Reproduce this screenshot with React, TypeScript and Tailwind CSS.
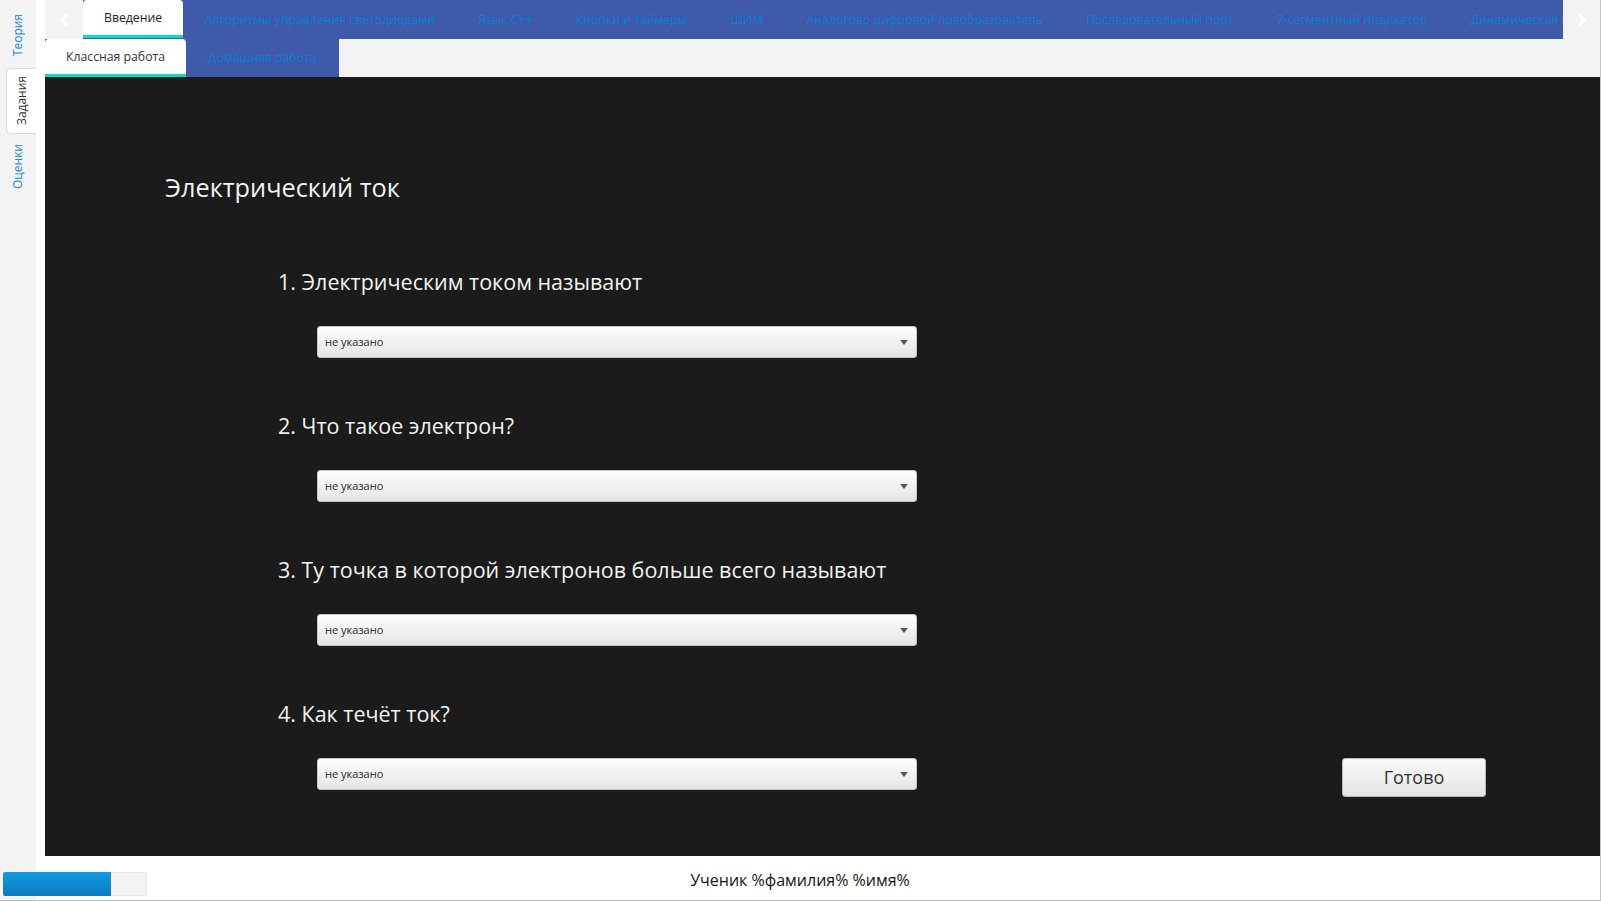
import { ChevronLeft, ChevronRight } from "lucide-react";

const topics = [
  "Алгоритмы управления светодиодами",
  "Язык С++",
  "Кнопки и таймеры",
  "ШИМ",
  "Аналогово цифровой преобразователь",
  "Последовательный порт",
  "7-сегментный индикатор",
  "Динамическая индикация",
];

const questions = [
  "Электрическим током называют",
  "Что такое электрон?",
  "Ту точка в которой электронов больше всего называют",
  "Как течёт ток?",
];

function Select() {
  return (
    <div className="ml-[39px] flex h-[32px] w-[600px] shrink-0 items-center justify-between rounded-[3px] border border-[#c4c4c4] bg-gradient-to-b from-[#fdfdfd] to-[#e5e5e5] pl-[7px] pr-[8px] text-[11px] text-[#2a2a2a]">
      <span>не указано</span>
      <svg width="8" height="5" viewBox="0 0 8 5">
        <path d="M0 0h8L4 5z" fill="#555" />
      </svg>
    </div>
  );
}

function SideTab({ label, active }: { label: string; active?: boolean }) {
  return (
    <div
      className={
        active
          ? "ml-[6px] flex h-[66px] items-center justify-center rounded-l-[5px] border border-r-0 border-[#dadada] bg-white text-[#333]"
          : "flex h-[66px] items-center justify-center text-[#1a86d2]"
      }
    >
      <span className="rotate-180 text-[12px] [writing-mode:vertical-rl]">{label}</span>
    </div>
  );
}

export default function App() {
  return (
    <div className="flex h-[901px] w-[1601px] flex-col border-r border-b border-[#c3c3c3] bg-white font-['Open_Sans',sans-serif]">
      <div className="flex min-h-0 flex-1">
        <aside className="w-[36px] shrink-0 bg-[#f3f3f3] pt-[2px]">
          <SideTab label="Теория" />
          <SideTab label="Задания" active />
          <SideTab label="Оценки" />
        </aside>

        <div className="ml-[9px] flex min-w-0 flex-1 flex-col">
          {/* lessons */}
          <div className="flex h-[39px] bg-[#f3f3f3]">
            <div className="flex w-[38px] shrink-0 items-center justify-center text-white">
              <ChevronLeft size={18} strokeWidth={4} />
            </div>
            <div className="flex min-w-0 flex-1 overflow-hidden bg-[#3f5aa9] text-[12.25px]">
              <div className="flex h-[38px] shrink-0 items-center rounded-t-[4px] border-b-[3px] border-[#0fd9c6] bg-white px-[21px] pt-[2px] font-medium text-[#222]">
                Введение
              </div>
              {topics.map((t) => (
                <div key={t} className="flex shrink-0 items-center whitespace-nowrap px-[21.6px] pt-[1px] text-[#0b7fd4]">
                  {t}
                </div>
              ))}
            </div>
            <div className="flex w-[37px] shrink-0 items-center justify-center text-white">
              <ChevronRight size={18} strokeWidth={4} />
            </div>
          </div>

          {/* work type */}
          <div className="flex h-[38px] bg-[#f3f3f3] text-[12.25px]">
            <div className="flex bg-[#3f5aa9]">
              <div className="flex items-center rounded-t-[4px] border-b-[3px] border-[#0fd9c6] bg-white px-[21px] pt-[2px] text-[#333]">
                Классная работа
              </div>
              <div className="flex items-center px-[22px] pt-[1px] text-[#0b7fd4]">Домашняя работа</div>
            </div>
          </div>

          <main className="flex-1 bg-[#1b1b1b] pl-[120px] pr-[114px] pt-[94px] text-[#f2f2f2]">
            <h1 className="text-[25.3px] leading-[32px]">Электрический ток</h1>
            <div className="mt-[65px] pl-[113px]">
              {questions.map((q, i) => (
                <div key={q} className={i ? "mt-[54px]" : ""}>
                  <p className="text-[21.5px] leading-[28px]">
                    {i + 1}. {q}
                  </p>
                  <div className="mt-[30px] flex items-start">
                    <Select />
                    {i === questions.length - 1 && (
                      <button className="ml-auto h-[39px] w-[144px] rounded-[3px] border border-[#b8b8b8] bg-gradient-to-b from-[#fafafa] to-[#e4e4e4] text-[18px] text-[#333]">
                        Готово
                      </button>
                    )}
                  </div>
                </div>
              ))}
            </div>
          </main>
        </div>
      </div>

      <footer className="grid h-[44px] shrink-0 grid-cols-[1fr_auto_1fr] bg-[linear-gradient(to_right,#f3f3f3_36px,#fff_36px)]">
        <div className="mb-[4px] ml-[3px] flex h-[24px] w-[144px] self-end">
          <div className="w-[108px] rounded-l-[2px] bg-gradient-to-b from-[#149be1] to-[#0a7bc0]" />
          <div className="flex-1 rounded-r-[2px] border border-l-0 border-[#e6e6e6] bg-[#f3f3f3]" />
        </div>
        <div className="self-center pt-[3px] text-[16px] text-[#151515]">Ученик %фамилия% %имя%</div>
        <div />
      </footer>
    </div>
  );
}
